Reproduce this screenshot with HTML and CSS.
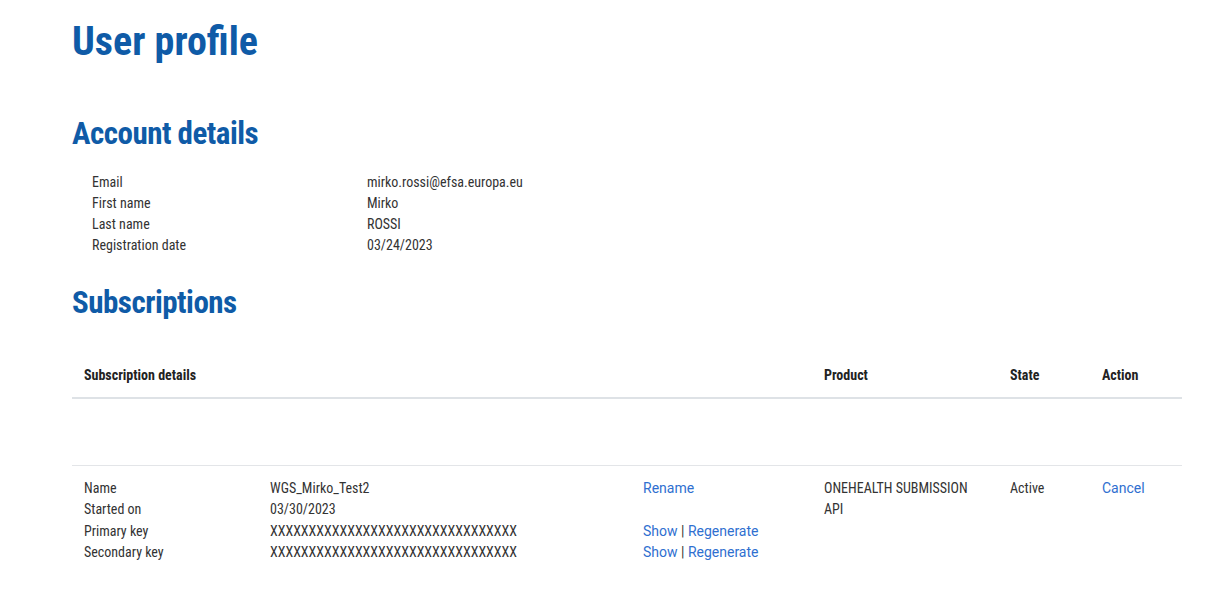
FILE: index.html
```html
<!DOCTYPE html>
<html>
<head>
<meta charset="utf-8">
<link rel="stylesheet" href="styles.css">
</head>
<body>
<main class="page">
  <h1 class="title">User profile</h1>

  <h2 class="section">Account details</h2>
  <div class="account">
    <div class="acc-row"><span class="acc-label">Email</span><span>mirko.rossi@efsa.europa.eu</span></div>
    <div class="acc-row"><span class="acc-label">First name</span><span>Mirko</span></div>
    <div class="acc-row"><span class="acc-label">Last name</span><span>ROSSI</span></div>
    <div class="acc-row"><span class="acc-label">Registration date</span><span>03/24/2023</span></div>
  </div>

  <h2 class="section section-sub">Subscriptions</h2>
  <table class="subs">
    <thead>
      <tr>
        <th class="c-details">Subscription details</th>
        <th class="c-product">Product</th>
        <th class="c-state">State</th>
        <th class="c-action">Action</th>
      </tr>
    </thead>
    <tbody>
      <tr class="empty-row"><td colspan="4"></td></tr>
      <tr class="data-row">
        <td>
          <div class="detail-grid">
            <span>Name</span><span>WGS_Mirko_Test2</span><span><a href="#">Rename</a></span>
            <span>Started on</span><span>03/30/2023</span><span></span>
            <span>Primary key</span><span>XXXXXXXXXXXXXXXXXXXXXXXXXXXXXXXX</span><span class="links"><a href="#">Show</a> | <a href="#">Regenerate</a></span>
            <span>Secondary key</span><span>XXXXXXXXXXXXXXXXXXXXXXXXXXXXXXXX</span><span class="links"><a href="#">Show</a> | <a href="#">Regenerate</a></span>
          </div>
        </td>
        <td>ONEHEALTH SUBMISSION API</td>
        <td>Active</td>
        <td><a href="#">Cancel</a></td>
      </tr>
    </tbody>
  </table>
</main>
</body>
</html>
```
FILE: styles.css
```css
* { box-sizing: border-box; }
body {
  margin: 0;
  background: #fff;
  font-family: Roboto, "Liberation Sans", sans-serif;
  font-stretch: 87.5%;
  color: #333;
  font-size: 14px;
}
.page {
  padding: 17px 45px 0 72px;
}
.title {
  margin: 0;
  font-size: 40px;
  line-height: 50px;
  font-weight: 700;
  color: #0f5ba7;
}
.section {
  margin: 48px 0 0;
  font-size: 31px;
  line-height: 38px;
  font-weight: 700;
  color: #0f5ba7;
  letter-spacing: -0.5px;
}
.section-sub { margin-top: 28px; }
.account {
  margin-top: 19px;
  padding-left: 20px;
}
.acc-row {
  display: flex;
  line-height: 21px;
}
.acc-label { width: 275px; }
.subs {
  margin-top: 26px;
  width: 1110px;
  border-collapse: collapse;
}
.subs th {
  text-align: left;
  vertical-align: top;
  font-weight: 700;
  color: #222;
  padding: 17px 12px 11px;
  line-height: 20px;
  border-bottom: 2px solid #dee2e6;
  height: 50px;
}
.c-details { width: 740px; }
.c-product { width: 186px; }
.c-state { width: 92px; }
.c-action { width: 92px; }
.empty-row td {
  height: 67px;
  border-bottom: 1px solid #e3e5e8;
}
.data-row td {
  vertical-align: top;
  padding: 12px 12px;
  line-height: 21px;
}
.detail-grid {
  display: grid;
  grid-template-columns: 186px 373px auto;
  line-height: 21.6px;
}
.links { font-stretch: 100%; }
a {
  color: #2f6fd0;
  text-decoration: none;
  font-stretch: 100%;
}
```
